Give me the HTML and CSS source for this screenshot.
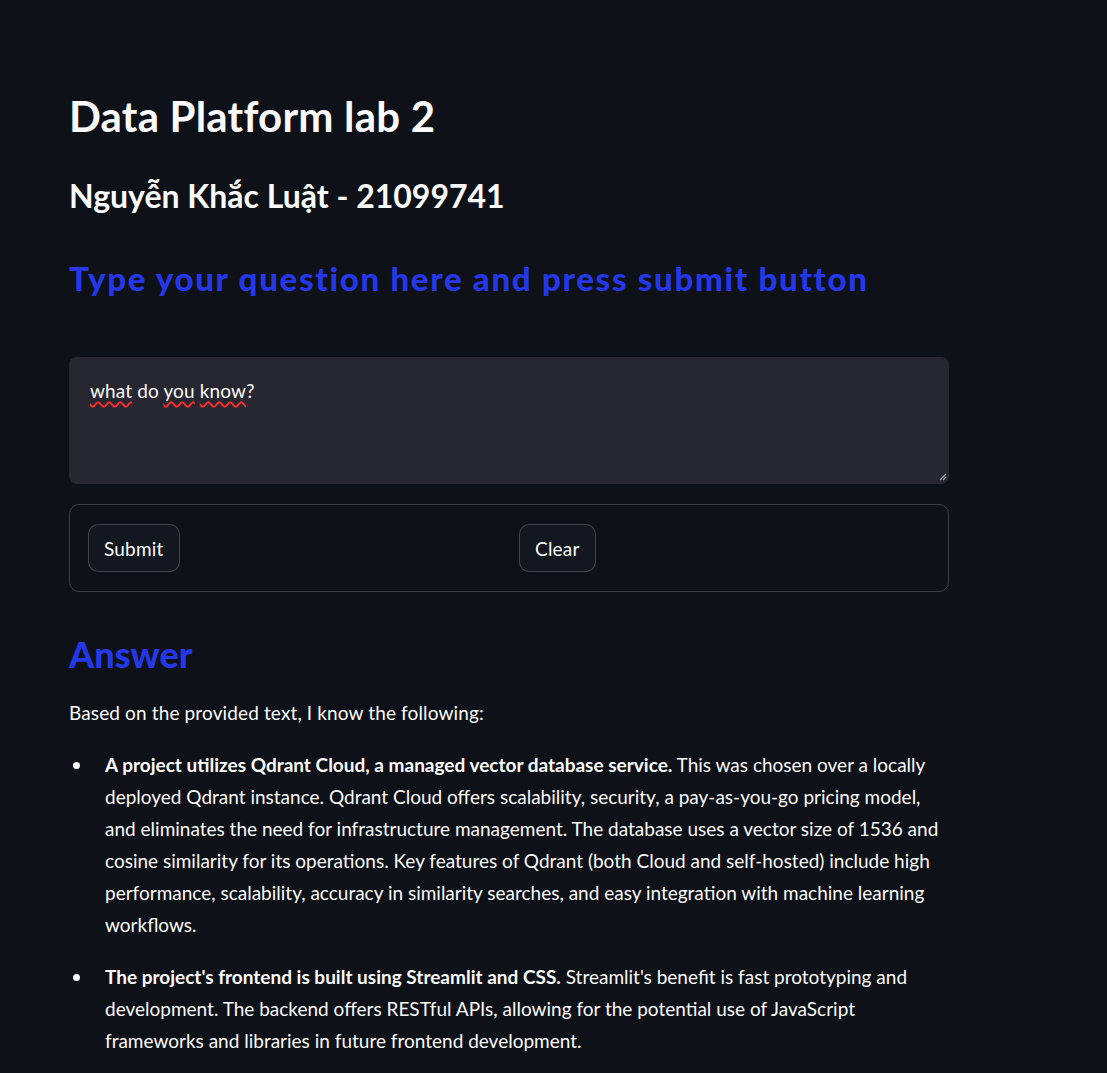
FILE: index.html
```html
<!DOCTYPE html>
<html lang="vi">
<head>
<meta charset="utf-8">
<title>Data Platform lab 2</title>
<link rel="stylesheet" href="styles.css">
</head>
<body>
<main class="main">
  <h1 class="title">Data Platform lab 2</h1>
  <h2 class="subtitle">Nguyễn Khắc Luật - 21099741</h2>
  <h3 class="prompt">Type your question here and press submit button</h3>

  <div class="textarea">
    <span class="typo">what</span> do <span class="typo">you</span> <span class="typo">know</span>?
    <svg class="resize" width="8" height="8" viewBox="0 0 8 8"><path d="M7 1 L1 7 M7 4 L4 7" stroke="#9a9ba3" stroke-width="1.3" fill="none"/></svg>
  </div>

  <form class="form">
    <div class="col"><button type="button" class="btn">Submit</button></div>
    <div class="col"><button type="button" class="btn">Clear</button></div>
  </form>

  <h3 class="answer-title">Answer</h3>
  <p class="para">Based on the provided text, I know the following:</p>
  <ul class="list">
    <li><strong>A project utilizes Qdrant Cloud, a managed vector database service.</strong> This was chosen over a locally deployed Qdrant instance. Qdrant Cloud offers scalability, security, a pay-as-you-go pricing model, and eliminates the need for infrastructure management. The database uses a vector size of 1536 and cosine similarity for its operations. Key features of Qdrant (both Cloud and self-hosted) include high performance, scalability, accuracy in similarity searches, and easy integration with machine learning workflows.</li>
    <li><strong>The project's frontend is built using Streamlit and CSS.</strong> Streamlit's benefit is fast prototyping and development. The backend offers RESTful APIs, allowing for the potential use of JavaScript frameworks and libraries in future frontend development.</li>
  </ul>
</main>
</body>
</html>
```
FILE: styles.css
```css
html { overflow: hidden; }
body {
  margin: 0;
  background: #0e1117;
  color: #fafafa;
  font-family: Lato, "Noto Sans", sans-serif;
}
.main {
  width: 880px;
  margin-left: 69px;
  padding-top: 92px;
}
.title {
  margin: 0;
  font-size: 42px;
  line-height: 48px;
  font-weight: 700;
  letter-spacing: 0.2px;
}
.subtitle {
  margin: 36px 0 0;
  font-size: 32px;
  line-height: 40px;
  font-weight: 700;
}
.prompt {
  margin: 42px 0 0;
  font-size: 33px;
  line-height: 40px;
  font-weight: 900;
  letter-spacing: 1.7px;
  color: #2438e8;
}
.textarea {
  position: relative;
  margin-top: 59px;
  height: 127px;
  box-sizing: border-box;
  padding: 20px 21px;
  background: #262730;
  border-radius: 8px;
  font-size: 19px;
  line-height: 28px;
  letter-spacing: 0.13px;
}
.typo {
  text-decoration: underline wavy #ff2b2b;
  text-decoration-thickness: 1.5px;
  text-underline-offset: 3px;
}
.resize {
  position: absolute;
  right: 2px;
  bottom: 3px;
}
.form {
  margin-top: 20px;
  border: 1px solid rgba(250, 250, 250, 0.2);
  border-radius: 10px;
  padding: 19px 18px;
  display: grid;
  grid-template-columns: 1fr 1fr;
  gap: 20px;
}
.btn {
  height: 48px;
  padding: 0 15px;
  background: #131720;
  color: #fafafa;
  border: 1px solid rgba(250, 250, 250, 0.2);
  border-radius: 10px;
  font-family: inherit;
  font-size: 19px;
  letter-spacing: 0.2px;
}
.answer-title {
  margin: 40px 0 0;
  font-size: 36px;
  line-height: 44px;
  font-weight: 900;
  color: #2438e8;
}
.para {
  margin: 21px 0 0;
  font-size: 19px;
  line-height: 32px;
  letter-spacing: 0.13px;
}
.list {
  list-style: none;
  margin: 20px 0 0;
  padding-left: 36px;
  font-size: 19px;
  line-height: 32px;
}
.list li { position: relative; }
.list li::before {
  content: "";
  position: absolute;
  left: -32px;
  top: 13px;
  width: 7px;
  height: 7px;
  border-radius: 50%;
  background: #fafafa;
}
.list li + li { margin-top: 20px; }
.list strong { font-weight: 700; }
```
